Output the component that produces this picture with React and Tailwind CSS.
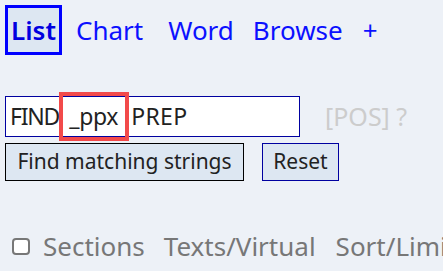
import React from 'react';

const App = () => {
  return (
    <div className="w-[443px] h-[271px] overflow-hidden bg-[#edf1f7] font-['Noto_Sans',sans-serif]">
      {/* nav tabs */}
      <div className="flex items-center pl-[5px] pt-[5px] text-[26px] text-[#0b10ff] leading-none">
        <div className="w-[57px] h-[50px] border-[3px] border-[#0000ff] bg-[#dde7f2] flex items-center justify-center font-semibold text-[#0000e0]">
          List
        </div>
        <span className="ml-[14px]">Chart</span>
        <span className="ml-[25px]">Word</span>
        <span className="ml-[19px]">Browse</span>
        <span className="ml-[20px]">+</span>
      </div>

      {/* query */}
      <div className="flex items-center mt-[41px] pl-[5px]">
        <div className="w-[295px] h-[41px] border border-[#0000a0] bg-white flex items-center pl-[4px] text-[23px] text-[#222] tracking-[-0.3px]">
          <span className="tracking-[-1.2px]">FIND</span>
          <span className="h-[49px] border-[4px] border-[#f24a4a] pl-[6px] pr-[7px] flex items-center">_ppx</span>
          <span className="ml-[2px] tracking-[0.3px]">PREP</span>
        </div>
        <span className="ml-[25px] text-[25px] text-[#cccccc]">[POS] ?</span>
      </div>

      <div className="flex items-center mt-[6px] pl-[5px] gap-[18px]">
        <button className="w-[239px] h-[38px] border border-black bg-[#dde7f2] text-[21px] text-[#222] flex items-center justify-center">
          Find matching strings
        </button>
        <button className="w-[77px] h-[38px] border border-[#0000a0] bg-[#dde7f2] text-[21px] text-[#222] flex items-center justify-center">
          Reset
        </button>
      </div>

      {/* options */}
      <div className="flex items-center mt-[46px] pl-[12px] text-[26px] text-[#777] whitespace-nowrap">
        <span className="shrink-0 w-[18px] h-[17px] border-2 border-[#777] rounded-[4px] bg-white" />
        <span className="ml-[13px]">Sections</span>
        <span className="ml-[19px]">Texts/Virtual</span>
        <span className="ml-[20px]">Sort/Limit</span>
      </div>
    </div>
  );
};

export default App;
